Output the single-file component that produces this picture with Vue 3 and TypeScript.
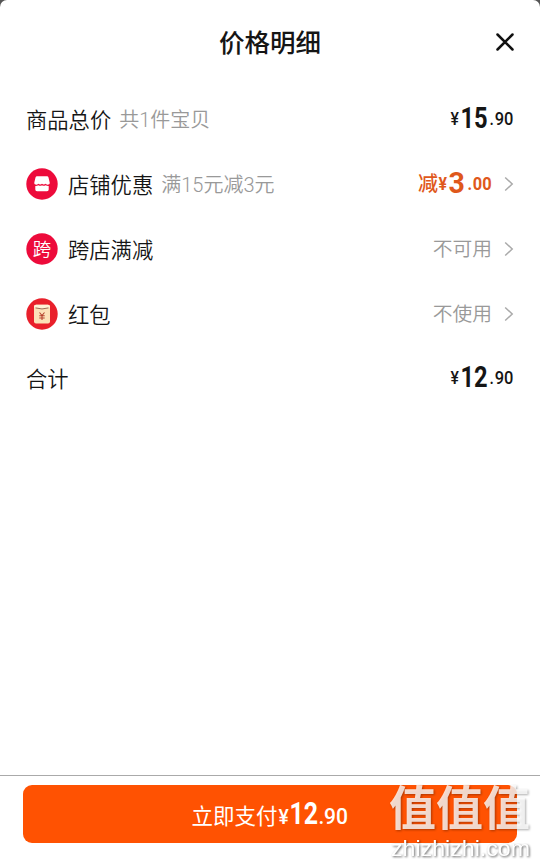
<script setup lang="ts">
interface Glyphs { text: string; x: number; y: number; size: number; stretch: number; weight: number }
type IconName = 'shop' | 'cross' | 'packet'
interface Row {
  label: string
  note?: string
  icon?: IconName
  status?: string
  prefix?: string
  price?: Glyphs[]
  link?: boolean
}

function price(whole: string, cents: string, wholeWidth: number, stretch: number, weight = 500): Glyphs[] {
  const end = 12 + wholeWidth
  return [
    { text: '¥', x: 0.5, y: 21.8, size: 18, stretch: 0.88, weight },
    { text: whole, x: 10.5, y: 25, size: 30, stretch, weight: 700 },
    { text: '.', x: end + 1.5, y: 21.8, size: 17.5, stretch: 0.9, weight },
    { text: cents, x: end + 6.7, y: 21.8, size: 17.5, stretch: 0.94, weight },
  ]
}

const rows: Row[] = [
  { label: '商品总价', note: '共1件宝贝', price: price('15', '90', 26, 0.79) },
  { label: '店铺优惠', note: '满15元减3元', icon: 'shop', prefix: '减', price: price('3', '00', 16, 0.95, 700), link: true },
  { label: '跨店满减', icon: 'cross', status: '不可用', link: true },
  { label: '红包', icon: 'packet', status: '不使用', link: true },
  { label: '合计', price: price('12', '90', 26, 0.79) },
]

const payPrice: Glyphs[] = [
  { text: '¥', x: 0.5, y: 26, size: 21, stretch: 0.92, weight: 500 },
  { text: '12', x: 11.5, y: 26, size: 31.5, stretch: 0.79, weight: 700 },
  { text: '.', x: 40.7, y: 26, size: 20, stretch: 0.9, weight: 700 },
  { text: '90', x: 46, y: 26, size: 21.5, stretch: 0.98, weight: 500 },
]
</script>

<template>
  <div class="screen">
    <main class="sheet">
      <header class="header">
        <span></span>
        <h1>价格明细</h1>
        <button class="close" aria-label="关闭">
          <svg width="20" height="20" viewBox="0 0 20 20"><path d="M2.5 2.5 17.5 17.5M17.5 2.5 2.5 17.5" /></svg>
        </button>
      </header>
      <section class="rows">
        <div v-for="row in rows" :key="row.label" class="row">
          <svg v-if="row.icon" class="icon" width="32" height="32" viewBox="0 0 32 32">
            <circle cx="16" cy="16" r="15.7" :fill="row.icon === 'packet' ? '#e9202b' : '#ed0b3b'" />
            <template v-if="row.icon === 'shop'">
              <path d="M11 8.2h10q1.200 0 1.500 1.200l1.200 5q.3 1.800-1.200 2.100-1.500.5-2.800-.8-2 1.500-3.700 0-1.700 1.500-3.700 0-1.300 1.300-2.800.8-1.500-.3-1.200-2.100l1.200-5q.3-1.200 1.500-1.200Z" fill="#fff" />
              <path d="M9.300 18q1.600.2 3-.8 2 1.200 3.700 0 1.700 1.200 3.700 0 1.400 1 3 .8v3.600q0 1.700-1.700 1.700H11q-1.700 0-1.700-1.700Z" fill="#fff" />
            </template>
            <text v-else-if="row.icon === 'cross'" class="cross-text" x="16" y="22.700">跨</text>
            <template v-else>
              <rect x="8" y="6.700" width="16" height="18.800" rx="2" fill="#fce1b8" />
              <path d="M8 9.500Q16 13 24 9.500V8.500Q24 6.700 22 6.700H10Q8 6.700 8 8.500Z" fill="#fff2d6" />
              <path d="M9.500 9.900Q16 12 22.500 9.900" fill="none" stroke="#925b45" stroke-width=".9" />
              <path d="m13.500 14.500 2.500 3 2.500-3M16 17.500v4.500M13.300 17.800h5.400M13.300 20h5.400" fill="none" stroke="#b5432f" stroke-width="1.100" />
            </template>
          </svg>
          <span class="label">{{ row.label }}</span>
          <span v-if="row.note" class="note">{{ row.note }}</span>
          <div class="value" :class="{ discount: row.prefix }">
            <span v-if="row.prefix" class="prefix">{{ row.prefix }}</span>
            <svg v-if="row.price" class="price" :width="row.prefix ? 54 : 64" height="32">
              <text v-for="part in row.price" :key="part.x" :transform="`translate(${part.x} ${part.y}) scale(${part.stretch} 1)`" :font-size="part.size" :font-weight="part.weight">{{ part.text }}</text>
            </svg>
            <span v-if="row.status" class="status">{{ row.status }}</span>
            <svg v-if="row.link" class="arrow" width="10" height="16" viewBox="0 0 10 16"><path d="m1.200 1.500 7 6.500-7 6.500" /></svg>
          </div>
        </div>
      </section>
    </main>
    <footer class="footer">
      <button class="pay">
        <span>立即支付</span>
        <svg class="price" width="71" height="32">
          <text v-for="part in payPrice" :key="part.x" :transform="`translate(${part.x} ${part.y}) scale(${part.stretch} 1)`" :font-size="part.size" :font-weight="part.weight">{{ part.text }}</text>
        </svg>
      </button>
      <svg class="watermark" width="150" height="106" viewBox="0 0 150 106">
        <text class="mark-name" x="3" y="66">值值值</text>
        <text class="mark-site" x="5" y="97" textLength="139" lengthAdjust="spacingAndGlyphs">zhizhizhi.com</text>
      </svg>
    </footer>
  </div>
</template>

<style>
body { background: #555; }
</style>

<style scoped>
.screen {
  box-sizing: border-box;
  width: 540px;
  height: 865px;
  display: flex;
  flex-direction: column;
  background: #fff;
  border-radius: 7px 7px 0 0;
  color: #151515;
  font-family: Roboto, "Noto Sans CJK SC", sans-serif;
  overflow: hidden;
}
.sheet { flex: 1; }
.header {
  height: 87px;
  display: grid;
  grid-template-columns: 45px 1fr 45px;
  align-items: center;
}
h1 {
  margin: 0;
  padding-bottom: 1px;
  text-align: center;
  font-size: 25.500px;
  font-weight: 500;
  line-height: 36px;
}
button { border: 0; padding: 0; background: none; color: inherit; font: inherit; }
.close { display: flex; margin-top: -3px; }
.close path { fill: none; stroke: #111; stroke-width: 2.500; stroke-linecap: round; }
.rows { padding: 0 26px; }
.row { height: 64.750px; display: flex; align-items: center; }
.icon { flex: none; margin-right: 10px; }
.label { font-family: "Noto Sans CJK SC", sans-serif; font-size: 21.300px; font-weight: 350; line-height: 32px; }
.note { padding-top: 2px; margin-left: 8px; font-size: 20px; font-weight: 350; line-height: 32px; color: #999; }
.value { margin-left: auto; display: flex; align-items: center; }
.price { display: block; fill: currentColor; font-family: Roboto, sans-serif; overflow: visible; }
.discount { color: #df581b; }
.prefix { font-size: 20px; font-weight: 500; line-height: 32px; }
.status { padding-top: 2px; font-size: 19.800px; font-weight: 350; line-height: 32px; color: #999; }
.arrow { margin-left: 12px; }
.arrow path { fill: none; stroke: #aaa; stroke-width: 1.500; }
.cross-text { fill: #fff; font-family: "Noto Sans CJK SC", sans-serif; font-size: 18.500px; font-weight: 350; text-anchor: middle; }
.footer {
  position: relative;
  box-sizing: border-box;
  height: 90px;
  padding: 9px 23px 22px;
  border-top: 1px solid #aaa;
}
.pay {
  width: 494px;
  height: 58px;
  display: flex;
  justify-content: center;
  align-items: center;
  border-radius: 9px;
  background: #ff5202;
  color: #fff;
  font-size: 21.500px;
}
.watermark { position: absolute; right: 4px; bottom: 0; }
.mark-name { fill: #fffc; font-family: "Noto Sans CJK SC", sans-serif; font-size: 47px; font-weight: 700; filter: drop-shadow(1px 1px 1px #0006); }
.mark-site { fill: #fff; font-family: "Liberation Sans", sans-serif; font-size: 22px; filter: drop-shadow(1px 1px 1px #0009); }
</style>
